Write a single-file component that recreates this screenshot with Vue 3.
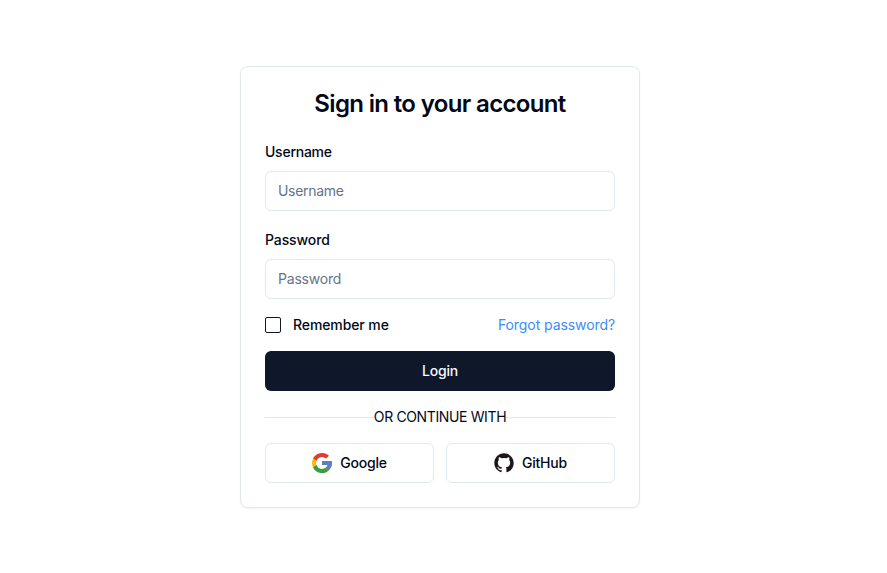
<script setup>
import { ref } from 'vue'

const username = ref('')
const password = ref('')
const remember = ref(false)
</script>

<template>
  <main class="page">
    <form class="card" @submit.prevent>
      <h1 class="title">Sign in to your account</h1>

      <div class="field">
        <label class="label user-label" for="username">Username</label>
        <input id="username" v-model="username" class="input user-input" type="text" placeholder="Username" />
      </div>

      <div class="field">
        <label class="label pass-label" for="password">Password</label>
        <input id="password" v-model="password" class="input pass-input" type="password" placeholder="Password" />
      </div>

      <div class="options">
        <label class="remember">
          <input v-model="remember" class="checkbox" type="checkbox" />
          <span>Remember me</span>
        </label>
        <a class="forgot" href="#">Forgot password?</a>
      </div>

      <button class="login" type="submit">Login</button>

      <div class="divider"><span>OR CONTINUE WITH</span></div>

      <div class="providers">
        <button class="provider" type="button">
          <svg class="icon" viewBox="4 4 40 40" aria-hidden="true">
            <path fill="#fbbc05" d="M43.6 20.1H42V20H24v8h11.3C33.7 32.7 29.2 36 24 36c-6.600 0-12-5.400-12-12s5.400-12 12-12c3.100 0 5.800 1.200 8 3l5.700-5.700C34 6.100 29.300 4 24 4 13 4 4 13 4 24s9 20 20 20 20-9 20-20c0-1.300-.1-2.700-.4-3.900z" />
            <path fill="#e53935" d="M6.300 14.700l6.600 4.800C14.700 15.100 19 12 24 12c3.100 0 5.800 1.200 8 3l5.700-5.700C34 6.100 29.300 4 24 4 16.300 4 9.700 8.300 6.300 14.700z" />
            <path fill="#34a047" d="M24 44c5.200 0 9.900-2 13.400-5.200l-6.200-5.200C29.200 35.100 26.700 36 24 36c-5.200 0-9.600-3.300-11.300-8l-6.500 5C9.500 39.600 16.200 44 24 44z" />
            <path fill="#5c81c2" d="M43.600 20.100H42V20H24v8h11.300c-.8 2.200-2.200 4.200-4.100 5.600l6.200 5.200C37 39.200 44 34 44 24c0-1.300-.1-2.700-.4-3.900z" />
          </svg>
          <span>Google</span>
        </button>
        <button class="provider" type="button">
          <svg class="icon" viewBox="-0.4 -0.1 24.8 24.8" aria-hidden="true">
            <path fill="#1b1419" d="M12 .3C5.370.3 0 5.670 0 12.300c0 5.300 3.440 9.800 8.200 11.390.6.110.82-.26.82-.58v-2.040c-3.340.73-4.040-1.610-4.040-1.610-.55-1.390-1.330-1.760-1.330-1.760-1.090-.74.08-.73.08-.73 1.200.09 1.840 1.240 1.840 1.240 1.070 1.830 2.810 1.300 3.490 1 .11-.78.42-1.310.76-1.610-2.660-.3-5.470-1.330-5.470-5.930 0-1.310.47-2.380 1.240-3.220-.12-.3-.54-1.520.12-3.180 0 0 1.010-.32 3.300 1.230a11.500 11.500 0 0 1 6.010 0c2.290-1.550 3.300-1.230 3.300-1.230.66 1.660.24 2.880.12 3.180.77.84 1.230 1.910 1.230 3.220 0 4.610-2.810 5.620-5.480 5.920.43.370.82 1.100.82 2.220v3.290c0 .32.21.7.83.58A12 12 0 0 0 24 12.300C24 5.670 18.630.3 12 .3z" />
          </svg>
          <span>GitHub</span>
        </button>
      </div>
    </form>
  </main>
</template>

<style>
body {
  background: #fff;
}
</style>

<style scoped>
.page {
  display: flex;
  align-items: center;
  justify-content: center;
  box-sizing: border-box;
  width: 880px;
  height: 573px;
  color: #020817;
  font: 400 14px/20px Inter, sans-serif;
}
.card {
  box-sizing: border-box;
  width: 400px;
  height: 442px;
  padding: 24px;
  border: 1px solid #e2e8f0;
  border-radius: 8px;
  background: #fff;
  box-shadow: 0 1px 2px rgba(0, 0, 0, 0.05);
}
.title {
  margin: 0 0 28px;
  text-align: center;
  white-space: nowrap;
  font-size: 24px;
  font-weight: 600;
  line-height: 26px;
  letter-spacing: -0.65px;
}
.field {
  display: flex;
  flex-direction: column;
  align-items: flex-start;
  gap: 12px;
  margin-bottom: 22px;
}
.label {
  font-weight: 500;
  line-height: 14px;
}
.user-label,
.user-input {
  letter-spacing: -0.25px;
}
.pass-label {
  letter-spacing: -0.1px;
}
.input {
  box-sizing: border-box;
  width: 100%;
  height: 40px;
  padding: 8px 12px;
  border: 1px solid #e2e8f0;
  border-radius: 6px;
  background: #fff;
  color: inherit;
  font: inherit;
}
.user-input {
  letter-spacing: -0.3px;
}
.pass-input {
  letter-spacing: -0.2px;
}
.input::placeholder {
  color: #64748b;
  opacity: 1;
}
.options {
  display: flex;
  align-items: center;
  justify-content: space-between;
  height: 20px;
  margin: -6px 0 16px;
}
.remember {
  display: flex;
  align-items: center;
  gap: 12px;
  font-weight: 500;
  letter-spacing: -0.1px;
}
.checkbox {
  appearance: none;
  box-sizing: border-box;
  width: 16px;
  height: 16px;
  margin: 0;
  border: 1px solid #0f172a;
  border-radius: 2px;
}
.checkbox:checked {
  background: #0f172a;
}
.forgot {
  color: #3b8cf6;
  text-decoration: none;
  letter-spacing: -0.08px;
}
.login,
.provider {
  display: flex;
  align-items: center;
  justify-content: center;
  box-sizing: border-box;
  height: 40px;
  padding: 0;
  border-radius: 6px;
  font: inherit;
  font-weight: 500;
  letter-spacing: -0.18px;
}
.login {
  width: 100%;
  border: 0;
  background: #0f172a;
  color: #f8fafc;
}
.divider {
  display: flex;
  align-items: center;
  height: 20px;
  margin: 16px 0;
  letter-spacing: -0.37px;
}
.divider::before,
.divider::after {
  content: '';
  flex: 1;
  height: 1px;
  margin-top: 1px;
  background: #e2e8f0;
}
.providers {
  display: grid;
  grid-template-columns: 1fr 1fr;
  gap: 12px;
}
.provider {
  gap: 8px;
  border: 1px solid #e2e8f0;
  background: #fff;
  color: #020817;
}
.icon {
  width: 20px;
  height: 20px;
}
</style>
